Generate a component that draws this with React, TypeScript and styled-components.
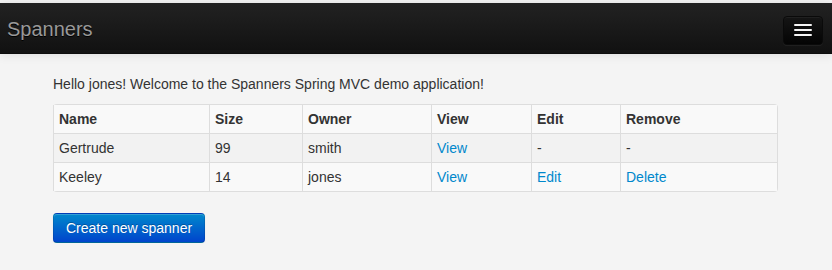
import React from "react";
import styled, { createGlobalStyle } from "styled-components";

const Global = createGlobalStyle`
  html, body { margin: 0; padding: 0; }
  body {
    background: #f4f4f4;
    font-family: "Liberation Sans", Arial, sans-serif;
    font-size: 14px;
    line-height: 20px;
    color: #333;
  }
`;

const Page = styled.div`
  padding-top: 3px;
`;

const Navbar = styled.header`
  height: 51px;
  display: flex;
  align-items: center;
  justify-content: space-between;
  padding: 0 9px 0 8px;
  background: linear-gradient(to bottom, #222222, #111111);
  box-shadow: 0 1px 10px rgba(0, 0, 0, 0.1);
  border-bottom: 1px solid #0c0c0c;
  box-sizing: border-box;
`;

const Brand = styled.a`
  color: #999;
  font-size: 20px;
  line-height: 20px;
  text-decoration: none;
  text-shadow: 0 1px 0 #000;
  margin-top: 1px;
  margin-left: -1px;
`;

const Toggle = styled.button`
  width: 40px;
  height: 29px;
  margin-top: 4px;
  padding: 0;
  display: flex;
  flex-direction: column;
  align-items: center;
  justify-content: center;
  gap: 3px;
  background: linear-gradient(to bottom, #151515, #040404);
  border: 1px solid #0a0a0a;
  border-radius: 4px;
  box-shadow: inset 0 1px 0 rgba(255, 255, 255, 0.05), 0 1px 0 rgba(255, 255, 255, 0.05);
`;

const Bar = styled.span`
  display: block;
  width: 18px;
  height: 2px;
  background: #f5f5f5;
  border-radius: 1px;
  box-shadow: 0 1px 0 rgba(0, 0, 0, 0.25);
`;

const Container = styled.main`
  width: 724px;
  margin: 0 0 0 53px;
  padding-top: 20px;
`;

const Greeting = styled.p`
  margin: 0 0 10px;
`;

const Table = styled.table`
  width: 100%;
  table-layout: fixed;
  border-collapse: separate;
  border-spacing: 0;
  border: 1px solid #dddddd;
  border-left: 0;
  border-radius: 4px;
  margin-bottom: 21px;
`;

const Th = styled.th`
  text-align: left;
  font-weight: bold;
  padding: 4px 5px;
  border-left: 1px solid #dddddd;
  background: #f9f9f9;
  line-height: 20px;
`;

const Row = styled.tr<{ $odd?: boolean }>`
  background: ${(p) => (p.$odd ? "#f2f2f2" : "#f9f9f9")};
`;

const Td = styled.td`
  padding: 4px 5px;
  border-left: 1px solid #dddddd;
  border-top: 1px solid #dddddd;
  line-height: 20px;
`;

const Link = styled.a`
  color: #0088cc;
  text-decoration: none;
`;

const PrimaryButton = styled.button`
  font-family: "Liberation Sans", Arial, sans-serif;
  font-size: 14px;
  line-height: 20px;
  padding: 4px 12px;
  color: #fff;
  text-shadow: 0 -1px 0 rgba(0, 0, 0, 0.25);
  background: linear-gradient(to bottom, #0088cc, #0044cc);
  border: 1px solid #0044cc;
  border-color: rgba(0, 0, 0, 0.1) rgba(0, 0, 0, 0.1) rgba(0, 0, 0, 0.25);
  border-radius: 4px;
  box-shadow: inset 0 1px 0 rgba(255, 255, 255, 0.2), 0 1px 2px rgba(0, 0, 0, 0.05);
  cursor: pointer;
`;

const widths = [156, 93, 129, 100, 89, 157];

const rows = [
  { name: "Gertrude", size: "99", owner: "smith", edit: false },
  { name: "Keeley", size: "14", owner: "jones", edit: true },
];

export default function App() {
  return (
    <Page>
      <Global />
      <Navbar>
        <Brand href="#">Spanners</Brand>
        <Toggle aria-label="menu">
          <Bar />
          <Bar />
          <Bar />
        </Toggle>
      </Navbar>
      <Container>
        <Greeting>Hello jones! Welcome to the Spanners Spring MVC demo application!</Greeting>
        <Table>
          <colgroup>
            {widths.map((w, i) => (
              <col key={i} style={{ width: w }} />
            ))}
          </colgroup>
          <thead>
            <tr>
              <Th>Name</Th>
              <Th>Size</Th>
              <Th>Owner</Th>
              <Th>View</Th>
              <Th>Edit</Th>
              <Th>Remove</Th>
            </tr>
          </thead>
          <tbody>
            {rows.map((r, i) => (
              <Row key={r.name} $odd={i % 2 === 0}>
                <Td>{r.name}</Td>
                <Td>{r.size}</Td>
                <Td>{r.owner}</Td>
                <Td>
                  <Link href="#">View</Link>
                </Td>
                <Td>{r.edit ? <Link href="#">Edit</Link> : "-"}</Td>
                <Td>{r.edit ? <Link href="#">Delete</Link> : "-"}</Td>
              </Row>
            ))}
          </tbody>
        </Table>
        <PrimaryButton>Create new spanner</PrimaryButton>
      </Container>
    </Page>
  );
}
